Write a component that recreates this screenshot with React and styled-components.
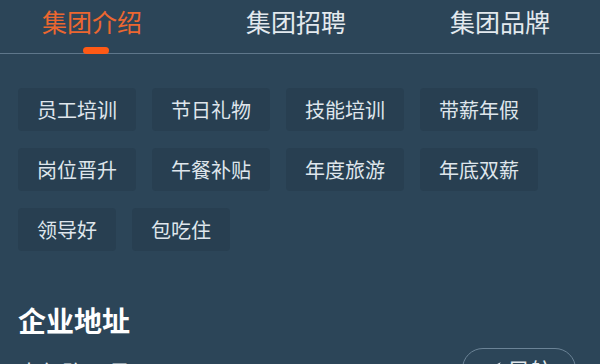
import React from "react";
import styled, { createGlobalStyle } from "styled-components";

const Global = createGlobalStyle`
  html, body { margin: 0; padding: 0; background: #2c4558; overflow: hidden; }
  body { font-family: "Noto Sans CJK SC", "Noto Sans", sans-serif; }
  * { box-sizing: border-box; }
`;

const Page = styled.div`
  width: 600px;
  height: 364px;
  background: #2c4558;
  overflow: hidden;
`;

const TabBar = styled.div`
  display: flex;
  gap: 104px;
  padding-left: 42px;
  height: 54px;
  border-bottom: 1px solid #5f778b;
`;

const Tab = styled.div`
  position: relative;
  width: 100px;
  height: 53px;
  font-size: 25px;
  line-height: 42px;
  white-space: nowrap;
  color: ${(p) => (p.$active ? "#ec6730" : "#e3e9ee")};
`;

const Indicator = styled.span`
  position: absolute;
  left: 41px;
  top: 47px;
  width: 26px;
  height: 7px;
  border-radius: 4px;
  background: #ff5a16;
`;

const Tags = styled.div`
  display: flex;
  flex-wrap: wrap;
  gap: 17px 16px;
  padding: 34px 18px 0;
  width: 580px;
`;

const Tag = styled.div`
  height: 43px;
  padding: 0 19px;
  border-radius: 4px;
  background: #283f51;
  color: #dfe6ec;
  font-size: 20px;
  line-height: 43px;
  white-space: nowrap;
`;

const Section = styled.div`
  padding: 50px 18px 0;
`;

const Title = styled.div`
  font-size: 28px;
  font-weight: 700;
  line-height: 38px;
  color: #ffffff;
`;

const AddressRow = styled.div`
  display: flex;
  justify-content: space-between;
  align-items: flex-start;
  margin-top: 15px;
`;

const Address = styled.div`
  font-size: 22px;
  line-height: 30px;
  color: #e6ecf0;
  padding-top: 2px;
`;

const NavButton = styled.div`
  display: flex;
  align-items: center;
  justify-content: center;
  gap: 6px;
  width: 114px;
  height: 42px;
  margin-right: 6px;
  margin-top: -6px;
  border: 1px solid #6b8396;
  border-radius: 21px;
  color: #dfe6ec;
  font-size: 22px;
`;

const tabs = ["集团介绍", "集团招聘", "集团品牌"];
const tags = [
  "员工培训", "节日礼物", "技能培训", "带薪年假",
  "岗位晋升", "午餐补贴", "年度旅游", "年底双薪",
  "领导好", "包吃住",
];

export default function App() {
  return (
    <Page>
      <Global />
      <TabBar>
        {tabs.map((t, i) => (
          <Tab key={t} $active={i === 0}>
            {t}
            {i === 0 && <Indicator />}
          </Tab>
        ))}
      </TabBar>
      <Tags>
        {tags.map((t) => (
          <Tag key={t}>{t}</Tag>
        ))}
      </Tags>
      <Section>
        <Title>企业地址</Title>
        <AddressRow>
          <Address>青年路01号</Address>
          <NavButton>
            <svg width="16" height="16" viewBox="0 0 24 24" fill="#dfe6ec">
              <path d="M3 11 L22 2 L13 21 L11 13 Z" />
            </svg>
            导航
          </NavButton>
        </AddressRow>
      </Section>
    </Page>
  );
}
